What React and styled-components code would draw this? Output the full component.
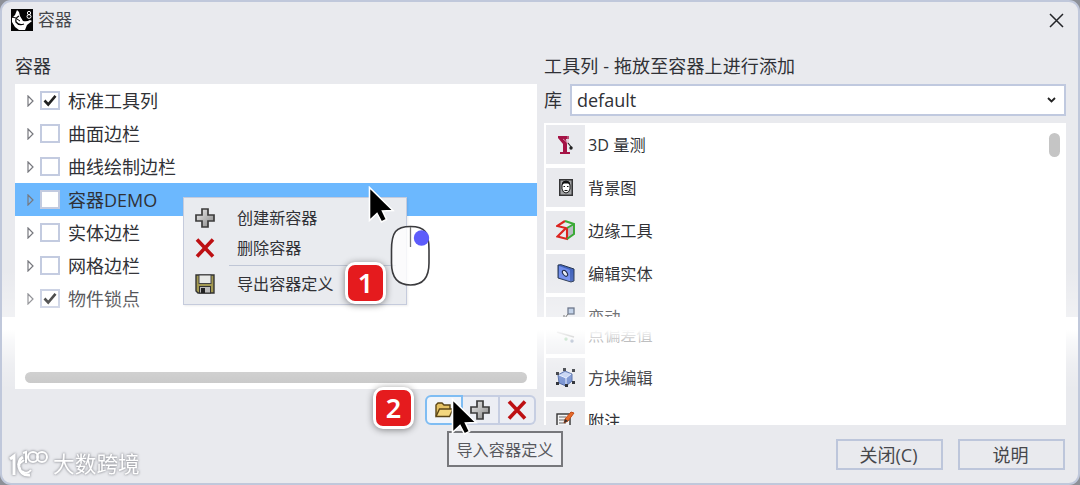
import React from "react";
import styled, { createGlobalStyle } from "styled-components";

const GlobalStyle = createGlobalStyle`
    * {
        box-sizing: border-box;
    }
    body {
        margin: 0;
        background: #8d9097;
        font-family: "Open Sans", "Noto Sans CJK SC", sans-serif;
        color: #303136;
    }
    button {
        font-family: inherit;
        color: inherit;
        padding: 0;
    }
    svg {
        display: block;
        flex-shrink: 0;
    }
`

const Window = styled.div`
    position: relative;
    width: 1080px;
    height: 485px;
    background: #e9eaee;
    border: 2px solid #c0c8db;
    border-radius: 11px;
    overflow: hidden;
`
const TitleBar = styled.div`
    height: 47px;
    padding: 6px 14px 0 9px;
    display: flex;
    align-items: flex-start;
    justify-content: space-between;
`
const Title = styled.div`
    display: flex;
    align-items: center;
    gap: 5px;
    height: 23px;
    font-size: 17px;
    line-height: 23px;
    color: #45464b;
`
const CloseButton = styled.button`
    width: 15px;
    height: 24px;
    border: none;
    background: none;
`
const Columns = styled.div`
    display: grid;
    grid-template-columns: 522px 522px;
    column-gap: 7px;
    padding-left: 13px;
`
const Column = styled.div`
    display: flex;
    flex-direction: column;
`
const Heading = styled.div`
    height: 35px;
    font-size: 18px;
    line-height: 35px;
    letter-spacing: ${props => props.$spacing || "0"};
    white-space: nowrap;
`
const Tree = styled.div`
    height: 305px;
    background: #fff;
    display: flex;
    flex-direction: column;
    justify-content: space-between;
    padding-bottom: 6px;
`
const TreeRow = styled.div`
    height: 33px;
    padding-left: 12px;
    display: flex;
    align-items: center;
    font-size: 18px;
    line-height: 33px;
    background: ${props => props.$selected ? "#6cb8fe" : "transparent"};
`
const TreeLabel = styled.span`
    padding-top: 2px;
`
const CheckBox = styled.div`
    width: 20px;
    height: 19px;
    margin: 0 8px 0 6px;
    border: 2px solid #c3cbe0;
    background: #fff;
    display: flex;
    align-items: center;
    justify-content: center;
`
const HScroll = styled.div`
    height: 11px;
    margin: 0 10px;
    border-radius: 6px;
    background: #c7c7c7;
`
const ToolButtons = styled.div`
    align-self: flex-end;
    display: flex;
    width: 111px;
    height: 30px;
    margin: 6px 1px 0 0;
`
const ToolButton = styled.button`
    flex: 1;
    display: flex;
    align-items: center;
    justify-content: center;
    background: ${props => props.$active ? "#f1f5fb" : "#eceef4"};
    border: 2px solid ${props => props.$active ? "#7fbdf3" : "#c6cee2"};
    border-left-width: ${props => props.$active ? "2px" : "0"};
    border-radius: ${props => props.$radius || "0"};
`
const LibraryRow = styled.div`
    display: flex;
    height: 32px;
    margin-bottom: 7px;
`
const LibraryLabel = styled.div`
    width: 26px;
    font-size: 18px;
    line-height: 32px;
`
const Select = styled.div`
    flex: 1;
    display: flex;
    align-items: center;
    justify-content: space-between;
    border: 2px solid #c0c9df;
    background: #fff;
    padding: 0 8px 0 5px;
    font-size: 18px;
    line-height: 28px;
`
const List = styled.div`
    height: ${props => props.$height};
    padding: ${props => props.$padding};
    background: #fff;
    overflow: hidden;
    display: flex;
    justify-content: space-between;
`
const ListRows = styled.div`
    display: flex;
    flex-direction: column;
    gap: 4px;
    margin-top: ${props => props.$offset || "0"};
`
const ListRow = styled.div`
    display: flex;
    align-items: center;
    gap: 4px;
    height: 39px;
    flex-shrink: 0;
    font-size: 16.200px;
    line-height: 39px;
    white-space: nowrap;
`
const ListLabel = styled.span`
    padding-top: 2px;
    margin-left: -1px;
`
const Tile = styled.div`
    width: 39px;
    height: 39px;
    background: #e9eaee;
    display: flex;
    align-items: center;
    justify-content: center;
`
const VScroll = styled.div`
    width: 11px;
    height: 24px;
    margin: 8px 6px 0 0;
    border-radius: 6px;
    background: #c5c5c5;
`
const Footer = styled.div`
    display: flex;
    gap: 15px;
    justify-content: flex-end;
    padding-top: 14px;
    padding-right: 1px;
`
const FooterButton = styled.button`
    width: 107px;
    height: 31px;
    padding-right: 2px;
    border: 2px solid #bdc6db;
    background: #e9eaee;
    font-size: 18px;
    line-height: 26px;
    color: #46474b;
`
// torn part of the window between the two halves
const Fade = styled.div`
    position: absolute;
    left: -2px;
    width: 1080px;
    top: ${props => props.$top};
    height: ${props => props.$height};
    background: ${props => props.$fill};
    pointer-events: none;
`
const Menu = styled.div`
    position: absolute;
    left: 181px;
    top: 195px;
    width: 224px;
    height: 108px;
    padding: 5px 0;
    background: #e9ebef;
    border: 1px solid #c5cbdc;
    box-shadow: 1px 1px 2px rgba(0, 0, 0, 0.08);
`
const MenuItem = styled.div`
    height: 30px;
    padding-left: 11px;
    display: flex;
    align-items: center;
    gap: 22px;
    font-size: 16.1px;
    line-height: 31px;
    white-space: nowrap;
`
const Separator = styled.div`
    height: 1px;
    margin: 2px 10px 3px 45px;
    background: #bfc6d6;
`
const Tooltip = styled.div`
    position: absolute;
    left: 445px;
    top: 429px;
    width: 116px;
    height: 36px;
    border: 2px solid #77787c;
    background: #eff0f4;
    font-size: 16.2px;
    line-height: 34px;
    text-align: center;
    color: #58595e;
    white-space: nowrap;
`
const Badge = styled.div`
    position: absolute;
    left: ${props => props.$left};
    top: ${props => props.$top};
    width: 41px;
    height: 42px;
    border: 3.5px solid #fff;
    border-radius: 10px;
    background: #e51b1e;
    box-shadow: 0 1px 7px rgba(0, 0, 0, 0.45);
    color: #fff;
    font-family: "Noto Sans", sans-serif;
    font-size: 27px;
    font-weight: 600;
    line-height: 36px;
    text-align: center;
`
const Overlay = styled.div`
    position: absolute;
    left: ${props => props.$left};
    top: ${props => props.$top};
`
const Watermark = styled.div`
    position: absolute;
    left: 7px;
    top: 447px;
    display: flex;
    align-items: flex-end;
    gap: 4px;
    color: #fff;
    font-size: 21.700px;
    line-height: 30px;
    white-space: nowrap;
    filter: drop-shadow(0 0 1px #9b9da3) drop-shadow(0 0 1px #b4b5ba);
`

const RhinoLogo = () => (
    <svg width="22" height="22" viewBox="0 0 22 22">
        <rect width="22" height="22" fill="#050505" />
        <path d="M6 1l2 2 1 4 3 5q4 1 7-1l2 1-5 4-2 5H8l-4-3-3-5V9l3-3z" fill="#fff" />
        <path d="M8 7q-4 2-3 6 3 4 8 2" fill="none" stroke="#050505" strokeWidth="1.300" />
        <path d="M1 8l4 1M6 10l3 2" fill="none" stroke="#050505" />
        <ellipse cx="18" cy="4" rx="1.600" ry="1.700" fill="none" stroke="#fff" />
        <ellipse cx="18" cy="7.500" rx="2" ry="1.900" fill="none" stroke="#fff" />
    </svg>
)

const Arrow = () => (
    <svg width="7" height="12" viewBox="0 0 7 12">
        <path d="M1 1l5 5-5 5z" fill="none" stroke="#77787e" strokeWidth="1.200" />
    </svg>
)

const Check = () => (
    <svg width="14" height="13" viewBox="0 0 14 13">
        <path d="M1.500 6.500l3.700 4L12.500 1.800" fill="none" stroke="#222" strokeWidth="2.600" />
    </svg>
)

const Plus = () => (
    <svg width="20" height="20" viewBox="0 0 20 20">
        <defs>
            <linearGradient id="plus" x1="0" y1="0" x2="1" y2="1">
                <stop offset="0" stopColor="#eee" />
                <stop offset="1" stopColor="#858585" />
            </linearGradient>
        </defs>
        <path d="M7 1h6v6h6v6h-6v6H7v-6H1V7h6z" fill="url(#plus)" stroke="#3c3c3c" strokeWidth="1.700" />
    </svg>
)

const Cross = () => (
    <svg width="20" height="20" viewBox="0 0 20 20">
        <path d="M2 1.500l16 17M18 1.500l-16 17" fill="none" stroke="#bd1013" strokeWidth="3.600" />
    </svg>
)

const Floppy = () => (
    <svg width="20" height="20" viewBox="0 0 20 20">
        <path d="M1 1h18v18H3l-2-2z" fill="#a29850" stroke="#333" strokeWidth="1.400" />
        <rect x="4" y="1" width="12" height="8.500" fill="#e8e9e7" stroke="#444" />
        <rect x="4.500" y="12.500" width="11" height="6.500" fill="#bbb" stroke="#333" />
        <rect x="6" y="14" width="4" height="5" fill="#222" />
    </svg>
)

const Folder = () => (
    <svg width="19" height="16" viewBox="0 0 19 16">
        <path d="M1 14V3l2-2h4l2 2h6v4" fill="#e5c264" stroke="#5b4617" strokeWidth="1.400" />
        <path d="M1 14.500L4.500 7H18l-3.500 7.500z" fill="#f3d77f" stroke="#5b4617" strokeWidth="1.400" />
    </svg>
)

const Cursor = () => (
    <svg width="27" height="38" viewBox="0 0 27 38">
        <path d="M1.500 1.500v33l7.500-7 4.500 8.500 5-2.500-4-8.500 10.500-.500z" fill="#000" stroke="#fff" strokeWidth="1.600" />
    </svg>
)

const MouseIcon = () => (
    <svg width="42" height="62" viewBox="0 0 42 62">
        <path d="M20.500 1.500C6 1.500 1.500 7 1.500 25v13c0 15 7 22 19 22s18.500-7 18.500-22V25C39 7 35 1.500 20.500 1.500z" fill="#fff" fillOpacity=".8" stroke="#3b3b3e" strokeWidth="1.600" />
        <path d="M20.500 2v20" stroke="#777" strokeWidth="1.300" />
        <circle cx="31.500" cy="13" r="7.700" fill="#5d5cfb" />
    </svg>
)

const MeasureIcon = () => (
    <svg width="18" height="20" viewBox="0 0 18 20">
        <path d="M1 1h11v3H9l1 5v8h3v2H3v-2h3V9L1 3z" fill="#a51346" />
        <path d="M6 4l5 4M11 1v8" fill="none" stroke="#d9a9bc" strokeWidth=".8" />
        <path d="M11 8l4 5" stroke="#222" strokeWidth="1.200" />
        <circle cx="14" cy="13" r="1.700" fill="#222" />
    </svg>
)

const PortraitIcon = () => (
    <svg width="14" height="17" viewBox="0 0 14 17">
        <rect x=".75" y=".75" width="12.500" height="15.500" fill="#a2a3a5" stroke="#343436" strokeWidth="1.500" />
        <path d="M3 6q0-4 4-4t4 4v4q-1 4-4 4t-4-4z" fill="#fff" stroke="#111" />
        <path d="M3 6q0-4 4-4t4 4L9 4.500H5z" fill="#111" />
        <path d="M4.500 7.500H6M8 7.500h1.500M5.500 11.500h3" stroke="#111" />
    </svg>
)

const EdgeIcon = () => (
    <svg width="20" height="21" viewBox="0 0 20 21">
        <path d="M11 8l7-4v10l-7 5z" fill="#b9bdc5" />
        <path d="M9 1L1 6l9 2-8.500 8.500L11 19V8" fill="none" stroke="#dc2420" strokeWidth="2.100" />
        <path d="M9 1l9 3v10l-7 5M11 8l7-4" fill="none" stroke="#3baa37" strokeWidth="2" />
    </svg>
)

const SolidIcon = () => (
    <svg width="18" height="19" viewBox="0 0 18 19">
        <path d="M1 1l3-.300L17 5v12l-3 1L1 14z" fill="#4264bd" stroke="#26344f" />
        <path d="M2 2l11 4v11L2 13.500z" fill="#718eec" />
        <ellipse cx="8" cy="9.300" rx="2" ry="3.400" transform="rotate(-38 8 9.300)" fill="#e8ecf5" stroke="#182343" />
    </svg>
)

const MoveIcon = () => (
    <svg width="20" height="20" viewBox="0 0 20 20">
        <rect x="12" y="1" width="6" height="6" fill="#a9bfdf" stroke="#34425f" strokeWidth="1.300" />
        <path d="M12 7l-3 4M8 8v4h4" fill="none" stroke="#333" />
        <rect x="2" y="12" width="6" height="6" fill="#a9bfdf" stroke="#34425f" />
    </svg>
)

const DeviationIcon = () => (
    <svg width="20" height="20" viewBox="0 0 20 20">
        <path d="M1 7l17 5" stroke="#444" strokeWidth="1.400" />
        <circle cx="10" cy="14" r="1.700" fill="#4ba35b" />
        <circle cx="16" cy="16" r="1.700" fill="#48618c" />
    </svg>
)

const CageIcon = () => (
    <svg width="21" height="21" viewBox="0 0 21 21">
        <path d="M10 4l7 3v7l-6 5-7-3-1-8z" fill="#7590d0" stroke="#4b65a4" />
        <path d="M4 8l6-3 6 2-5 4z" fill="#c3d2f3" />
        <path d="M11 11v7M4 8l7 3 5-4" fill="none" stroke="#e4edff" />
        <path d="M1 5h3v3H1zM8 1h3v3H8zM17 2h3v3h-3zM1 15h3v3H1zM10 17h3v3h-3zM17 14h3v3h-3z" fill="#262930" />
    </svg>
)

const NoteIcon = () => (
    <svg width="19" height="20" viewBox="0 0 19 20">
        <rect x="1" y="3" width="13" height="16" fill="#f4f4f4" stroke="#333" strokeWidth="1.400" />
        <path d="M3 6h7M3 9h6M3 12h7M3 15h6" stroke="#666" />
        <path d="M8 12l1-4 6-7 3 1-6 8z" fill="#e66a2a" stroke="#c24a16" />
        <path d="M8 12l1-4 3 2z" fill="#333" />
    </svg>
)

const containers = [
    { name: "标准工具列", checked: true },
    { name: "曲面边栏" },
    { name: "曲线绘制边栏" },
    { name: "容器DEMO", selected: true },
    { name: "实体边栏" },
    { name: "网格边栏" },
    { name: "物件锁点", checked: true },
]

const upperTools = [
    { name: "3D 量测", Icon: MeasureIcon },
    { name: "背景图", Icon: PortraitIcon },
    { name: "边缘工具", Icon: EdgeIcon },
    { name: "编辑实体", Icon: SolidIcon },
    { name: "变动", Icon: MoveIcon },
]

const lowerTools = [
    { name: "点偏差值", Icon: DeviationIcon },
    { name: "方块编辑", Icon: CageIcon },
    { name: "附注", Icon: NoteIcon },
]

const ToolList = ({ tools, offset }) => (
    <ListRows $offset={offset}>
        {tools.map(({ name, Icon }) => (
            <ListRow key={name}>
                <Tile><Icon /></Tile>
                <ListLabel>{name}</ListLabel>
            </ListRow>
        ))}
    </ListRows>
)

const App = () => {
    return (
        <Window>
            <GlobalStyle />
            <TitleBar>
                <Title><RhinoLogo />容器</Title>
                <CloseButton>
                    <svg width="15" height="15" viewBox="0 0 15 15">
                        <path d="M1 1l13 13M14 1L1 14" stroke="#242529" strokeWidth="1.500" />
                    </svg>
                </CloseButton>
            </TitleBar>
            <Columns>
                <Column>
                    <Heading>容器</Heading>
                    <Tree>
                        <div>
                            {containers.map(item => (
                                <TreeRow key={item.name} $selected={item.selected}>
                                    <Arrow />
                                    <CheckBox>{item.checked && <Check />}</CheckBox>
                                    <TreeLabel>{item.name}</TreeLabel>
                                </TreeRow>
                            ))}
                        </div>
                        <HScroll />
                    </Tree>
                    <ToolButtons>
                        <ToolButton $active $radius="6px 0 0 6px"><Folder /></ToolButton>
                        <ToolButton><Plus /></ToolButton>
                        <ToolButton $radius="0 6px 6px 0"><Cross /></ToolButton>
                    </ToolButtons>
                </Column>
                <Column>
                    <Heading $spacing="0.13px">工具列 - 拖放至容器上进行添加</Heading>
                    <LibraryRow>
                        <LibraryLabel>库</LibraryLabel>
                        <Select>
                            default
                            <svg width="9" height="7" viewBox="0 0 9 7">
                                <path d="M1 1l3.500 3.500L8 1" fill="none" stroke="#222" strokeWidth="1.800" />
                            </svg>
                        </Select>
                    </LibraryRow>
                    <List $height="194px" $padding="2px 0 0 2px">
                        <ToolList tools={upperTools} />
                        <VScroll />
                    </List>
                    <List $height="108px" $padding="0 0 0 2px">
                        <ToolList tools={lowerTools} offset="-2px" />
                    </List>
                    <Footer>
                        <FooterButton>关闭(C)</FooterButton>
                        <FooterButton>说明</FooterButton>
                    </Footer>
                </Column>
            </Columns>

            <Fade $top="268px" $height="47px" $fill="linear-gradient(rgba(255,255,255,0), rgba(255,255,255,.35))" />
            <Fade $top="315px" $height="72px" $fill="linear-gradient(#fff 0, #fff 18%, rgba(255,255,255,.7) 33%, rgba(255,255,255,.25) 65%, rgba(255,255,255,0))" />

            <Menu>
                <MenuItem><Plus />创建新容器</MenuItem>
                <MenuItem><Cross />删除容器</MenuItem>
                <Separator />
                <MenuItem><Floppy />导出容器定义</MenuItem>
            </Menu>
            <Overlay $left="366px" $top="184px"><Cursor /></Overlay>
            <Overlay $left="388px" $top="223px"><MouseIcon /></Overlay>
            <Badge $left="343px" $top="260px">1</Badge>
            <Badge $left="371px" $top="385px">2</Badge>
            <Tooltip>导入容器定义</Tooltip>
            <Overlay $left="449px" $top="396px"><Cursor /></Overlay>
            <Watermark>
                <svg width="40" height="30" viewBox="0 0 40 30">
                    <path d="M1 10l4-3v19M14 8q-5 3-4 10 2 9 11 8" fill="none" stroke="#fff" strokeWidth="3" />
                    <path d="M9 16l6-5M13 22q5 4 9-1" fill="none" stroke="#fff" strokeWidth="2" />
                    <path d="M14 4l3-1v11" fill="none" stroke="#fff" strokeWidth="2" />
                    <circle cx="24" cy="8" r="5" fill="none" stroke="#fff" strokeWidth="2" />
                    <circle cx="33" cy="8" r="5" fill="none" stroke="#fff" strokeWidth="2" />
                </svg>
                大数跨境
            </Watermark>
        </Window>
    );
};

export default App;
